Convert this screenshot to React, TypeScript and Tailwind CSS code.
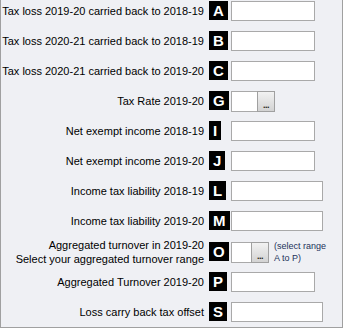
import React from "react";

type Row = {
  label: React.ReactNode;
  code: string;
  kind: "short" | "long" | "pick" | "pickNarrow";
  extra?: boolean;
};

const rows: Row[] = [
  { label: "Tax loss 2019-20 carried back to 2018-19", code: "A", kind: "short" },
  { label: "Tax loss 2020-21 carried back to 2018-19", code: "B", kind: "short" },
  { label: "Tax loss 2020-21 carried back to 2019-20", code: "C", kind: "short" },
  { label: "Tax Rate 2019-20", code: "G", kind: "pick" },
  { label: "Net exempt income 2018-19", code: "I", kind: "short" },
  { label: "Net exempt income 2019-20", code: "J", kind: "short" },
  { label: "Income tax liability 2018-19", code: "L", kind: "long" },
  { label: "Income tax liability 2019-20", code: "M", kind: "long" },
  {
    label: (
      <>
        Aggregated turnover in 2019-20
        <br />
        Select your aggregated turnover range
      </>
    ),
    code: "O",
    kind: "pickNarrow",
    extra: true,
  },
  { label: "Aggregated Turnover 2019-20", code: "P", kind: "short" },
  { label: "Loss carry back tax offset", code: "S", kind: "long" },
];

const PickButton = () => (
  <div className="flex h-[21px] w-[18px] items-end justify-center border border-[#a0a0a0] bg-gradient-to-b from-[#f2f2f2] to-[#d3d3d3] pb-[3px]">
    <span className="text-[9px] font-bold leading-[6px] tracking-[-0.5px] text-[#222]">...</span>
  </div>
);

const Field = ({ kind }: { kind: Row["kind"] }) => {
  if (kind === "short") return <div className="h-[20px] w-[84px] border border-[#a9a9a9] bg-white" />;
  if (kind === "long") return <div className="h-[20px] w-[92px] border border-[#a9a9a9] bg-white" />;
  if (kind === "pick")
    return (
      <div className="flex h-[21px]">
        <div className="h-[21px] w-[26px] border-y border-l border-[#a9a9a9] bg-white" />
        <PickButton />
      </div>
    );
  return (
    <div className="flex items-center">
      <div className="flex h-[21px]">
        <div className="h-[21px] w-[20px] border-y border-l border-[#a9a9a9] bg-white" />
        <PickButton />
      </div>
      <div className="ml-[5px] text-[9px] leading-[12px] text-[#23325a]">
        (select range
        <br />
        A to P)
      </div>
    </div>
  );
};

export default function App() {
  return (
    <div className="flex h-[328px] w-[343px] flex-col gap-[10px] overflow-hidden border-x border-b border-[#a0a0a0] bg-[#eff0f4] pt-[1px] font-['Liberation_Sans',Arial,sans-serif] text-[11px] text-black">
      {rows.map((r) => (
        <div key={r.code} className={"flex h-[20px] items-center " + (r.extra ? "mt-[1px]" : "")}>
          <div className="w-[203px] shrink-0 text-right leading-[14px]">{r.label}</div>
          <div className="w-[27px] shrink-0 pl-[5px]">
            <span className="inline-flex h-[19px] items-center justify-center bg-black px-[4px] text-[15px] font-bold leading-none text-white">
              {r.code}
            </span>
          </div>
          <Field kind={r.kind} />
        </div>
      ))}
    </div>
  );
}
